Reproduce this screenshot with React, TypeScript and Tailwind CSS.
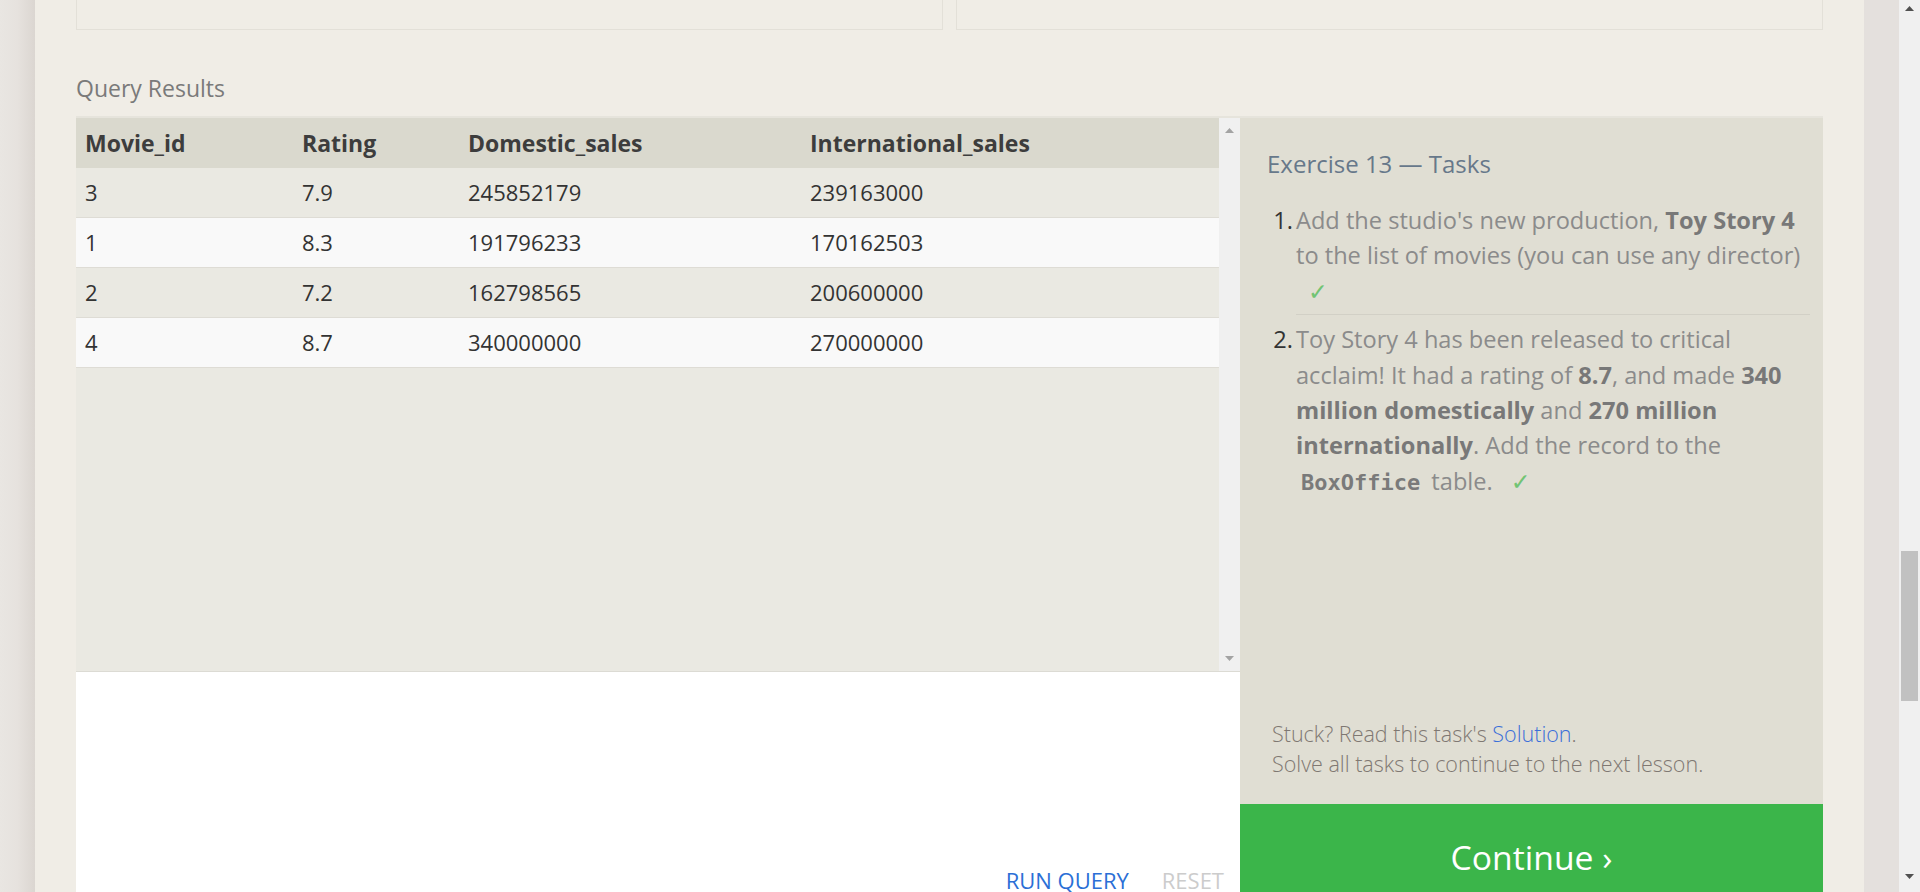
import React from "react";

const rows = [
  ["3", "7.9", "245852179", "239163000"],
  ["1", "8.3", "191796233", "170162503"],
  ["2", "7.2", "162798565", "200600000"],
  ["4", "8.7", "340000000", "270000000"],
];

function Check({ className = "" }: { className?: string }) {
  return (
    <span
      className={`inline-block text-[#72c474] ${className}`}
      style={{ fontFamily: "'DejaVu Sans', sans-serif" }}
    >
      ✓
    </span>
  );
}

export default function App() {
  return (
    <div
      className="w-[1920px] h-[892px] flex overflow-hidden bg-[#f0ede6]"
      style={{ fontFamily: "'Open Sans', 'Liberation Sans', sans-serif" }}
    >
      {/* left gutter */}
      <div className="w-[35px] shrink-0 bg-gradient-to-r from-[#e9e6e2] via-[#e6e2de] to-[#dbd6d1]" />

      {/* main */}
      <div className="flex-1 px-[41px] flex flex-col min-w-0">
        {/* top panels */}
        <div className="flex gap-[13px] h-[30px] shrink-0">
          <div className="flex-1 border-x border-b border-[#e3e0d8]" />
          <div className="flex-1 border-x border-b border-[#e3e0d8]" />
        </div>

        <div className="mt-[42px] h-[32px] leading-[32px] text-[23px] text-[#7a7a7a]">
          Query Results
        </div>

        <div className="mt-[12px] h-[776px] shrink-0 flex border-t-2 border-[#e6e4dc]">
          {/* left column */}
          <div className="w-[1164px] shrink-0 flex flex-col">
            <div className="h-[553px] shrink-0 flex bg-[#eae9e2]">
              <div className="flex-1 flex flex-col">
                <div className="grid grid-cols-[217px_166px_342px_1fr] h-[50px] bg-[#dad9ce] items-center text-[23px] font-bold text-[#3d3d3d]">
                  <div className="pl-[9px]">Movie_id</div>
                  <div className="pl-[9px]">Rating</div>
                  <div className="pl-[9px]">Domestic_sales</div>
                  <div className="pl-[9px]">International_sales</div>
                </div>
                {rows.map((r, i) => (
                  <div
                    key={i}
                    className={`grid grid-cols-[217px_166px_342px_1fr] h-[50px] items-center text-[22px] text-[#333] border-b border-[#dedcd5] ${
                      i % 2 === 0 ? "bg-[#eae9e2]" : "bg-[#f9f9f9]"
                    }`}
                  >
                    {r.map((c, j) => (
                      <div key={j} className="pl-[9px]">
                        {c}
                      </div>
                    ))}
                  </div>
                ))}
              </div>
              {/* inner scrollbar */}
              <div className="w-[21px] shrink-0 bg-[#f0f0f0] flex flex-col items-center justify-between pt-[10px] pb-[10px]">
                <svg width="9" height="5" viewBox="0 0 9 5">
                  <path d="M0 5 L4.5 0 L9 5 Z" fill="#a3a3a3" />
                </svg>
                <svg width="9" height="5" viewBox="0 0 9 5">
                  <path d="M0 0 L4.5 5 L9 0 Z" fill="#a3a3a3" />
                </svg>
              </div>
            </div>
            <div className="flex-1 bg-white border-t border-[#dcdbd4] pt-[197px] pr-[16px] flex justify-end gap-[33px] text-[22px] leading-[22px] whitespace-nowrap">
              <span className="text-[#2b6fd6]">RUN QUERY</span>
              <span className="text-[#cccccc]">RESET</span>
            </div>
          </div>

          {/* right tasks column */}
          <div className="flex-1 flex flex-col bg-[#e0ded3]">
            <div className="pt-[28px] pl-[27px] pr-[13px]">
              <div className="text-[24px] leading-[36px] text-[#67788a]">
                Exercise 13 — Tasks
              </div>
              <ol className="mt-[21px] text-[23.6px] leading-[35.4px] text-[#8b8b8b]">
                <li className="flex">
                  <span className="w-[29px] shrink-0 text-right pr-[3px] text-[#333]">1.</span>
                  <div className="flex-1 border-b border-[#d2d0c6] pb-[4px]">
                    Add the studio's new production,{" "}
                    <b className="font-bold text-[#787878]">Toy Story 4</b>
                    <br />
                    to the list of movies (you can use any director)
                    <br />
                    <Check className="ml-[12px]" />
                  </div>
                </li>
                <li className="flex pt-[7px]">
                  <span className="w-[29px] shrink-0 text-right pr-[3px] text-[#333]">2.</span>
                  <div className="flex-1">
                    Toy Story 4 has been released to critical
                    <br />
                    acclaim! It had a rating of{" "}
                    <b className="font-bold text-[#787878]">8.7</b>, and made{" "}
                    <b className="font-bold text-[#787878]">340</b>
                    <br />
                    <b className="font-bold text-[#787878]">million domestically</b> and{" "}
                    <b className="font-bold text-[#787878]">270 million</b>
                    <br />
                    <b className="font-bold text-[#787878]">internationally</b>. Add the record to the
                    <br />
                    <code
                      className="px-[5px] font-bold text-[22px] text-[#7a7a7a]"
                      style={{ fontFamily: "'DejaVu Sans Mono', 'Liberation Mono', monospace" }}
                    >
                      BoxOffice
                    </code>{" "}
                    table. <Check className="ml-[12px]" />
                  </div>
                </li>
              </ol>
            </div>
            <div className="flex-1" />
            <div className="pl-[32px] pb-[25px] text-[21.5px] font-light leading-[30px] text-[#7f7872]">
              <div>
                Stuck? Read this task's <span className="text-[#3b6fd9]">Solution</span>.
              </div>
              <div>Solve all tasks to continue to the next lesson.</div>
            </div>
            <div className="h-[88px] shrink-0 bg-[#3bb54a] text-white text-center text-[33.7px] leading-[35px] pt-[36px]">
              Continue ›
            </div>
          </div>
        </div>
      </div>

      {/* right gutter */}
      <div className="w-[35px] shrink-0 bg-[#e4e0dd]" />

      {/* browser scrollbar */}
      <div className="w-[21px] shrink-0 bg-[#f0f0f0] flex flex-col items-center">
        <div className="h-[14px] flex items-center justify-center pt-[2px]">
          <svg width="9" height="5" viewBox="0 0 9 5">
            <path d="M0 5 L4.5 0 L9 5 Z" fill="#505050" />
          </svg>
        </div>
        <div className="h-[537px]" />
        <div className="w-[17px] h-[150px] bg-[#c1c1c1]" />
        <div className="flex-1" />
        <div className="h-[18px] flex items-start justify-center">
          <svg width="9" height="5" viewBox="0 0 9 5">
            <path d="M0 0 L4.5 5 L9 0 Z" fill="#505050" />
          </svg>
        </div>
      </div>
    </div>
  );
}
